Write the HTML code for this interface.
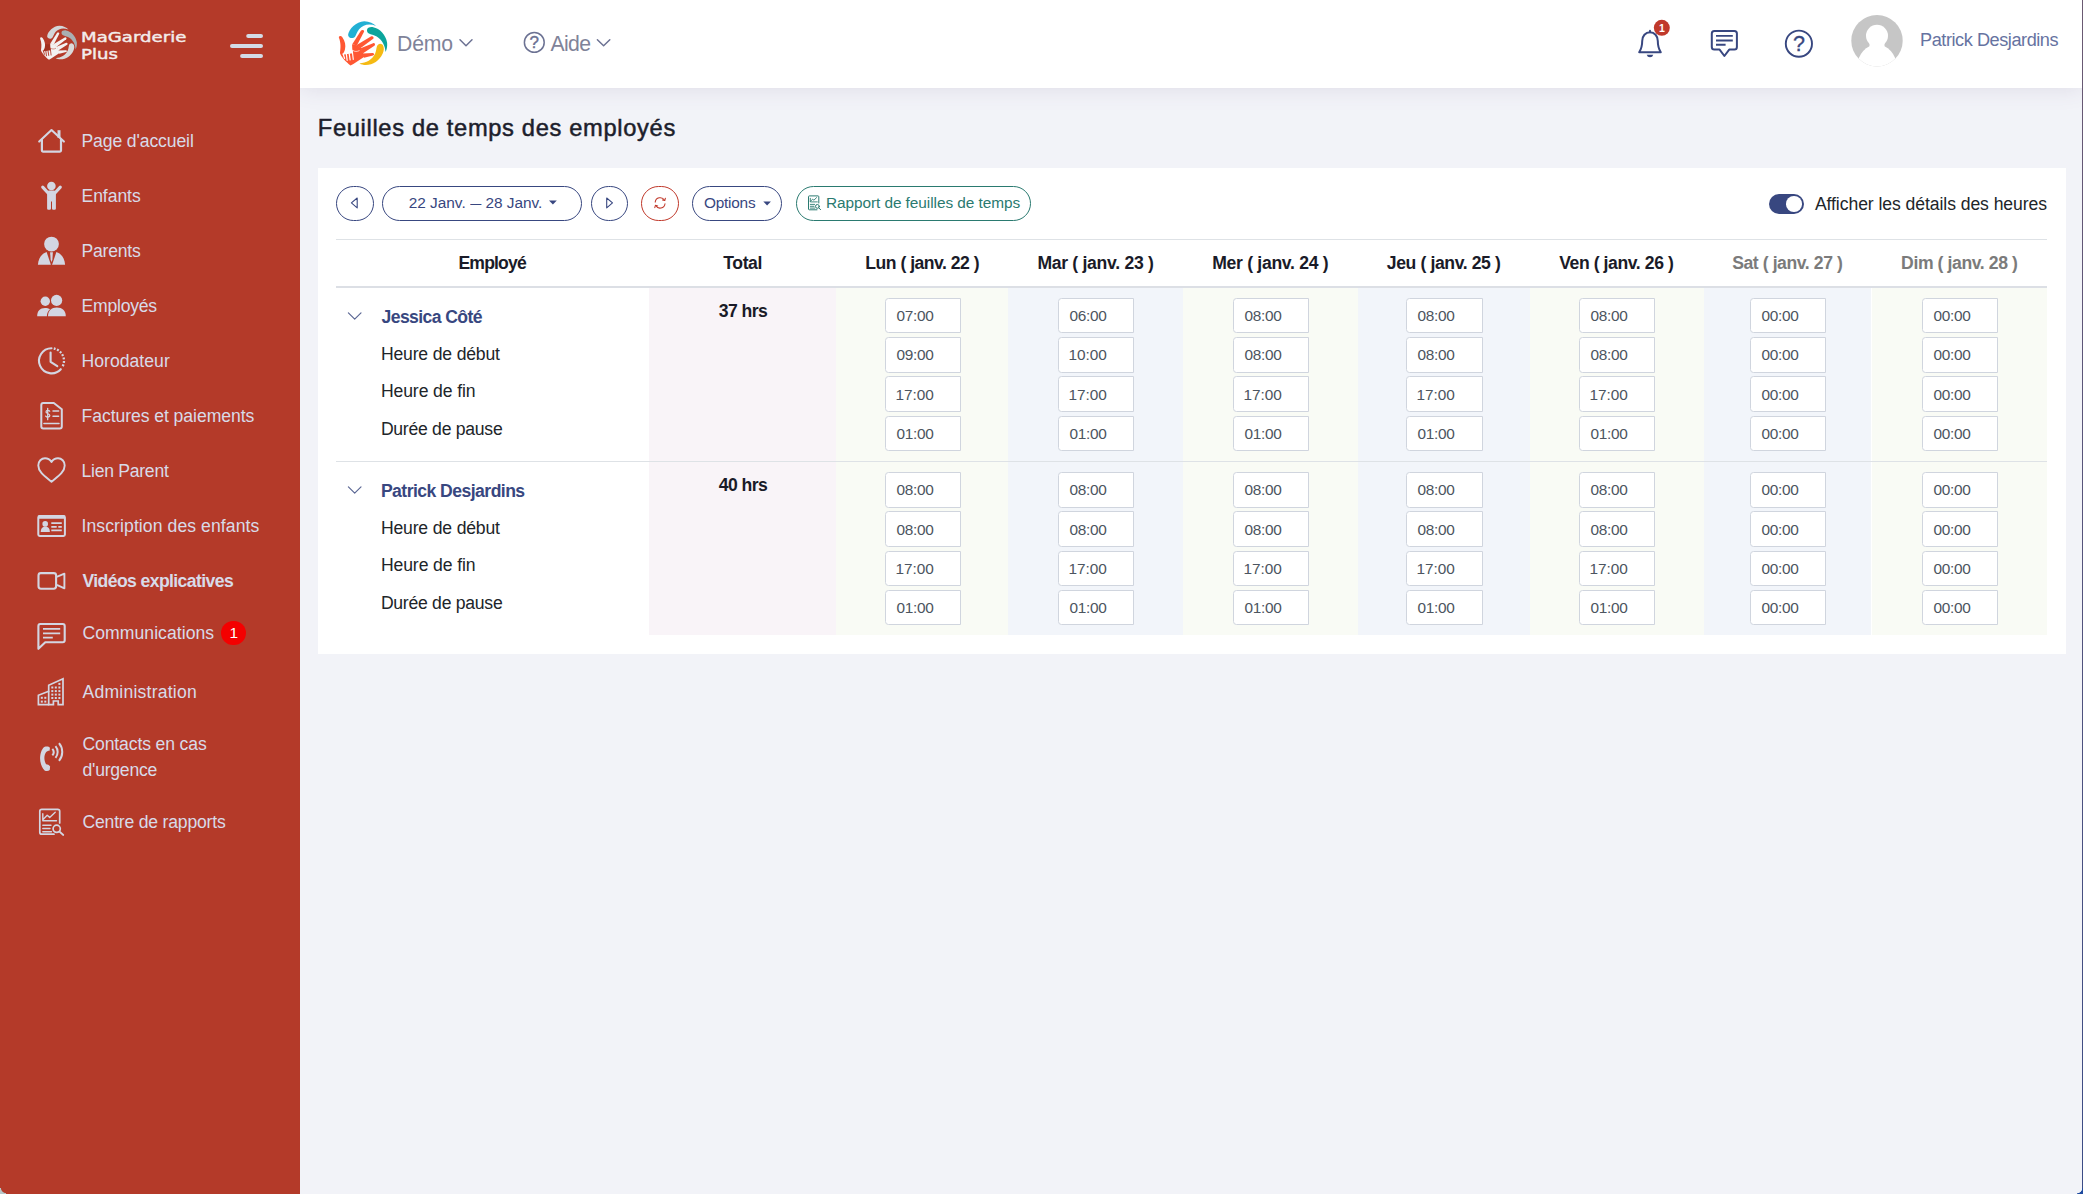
<!DOCTYPE html>
<html lang="fr">
<head>
<meta charset="utf-8">
<title>Feuilles de temps des employés</title>
<style>
*{box-sizing:border-box;margin:0;padding:0}
html,body{width:2083px;height:1194px;overflow:hidden;background:#f2f3f8}
body{font-family:"Liberation Sans",sans-serif;color:#212529}
#app{position:relative;width:2083px;height:1194px;overflow:hidden;background:#f2f3f8}
.t{position:absolute;white-space:nowrap;display:block;font-variant-ligatures:none}
.abs{position:absolute}
#sidebar{z-index:5;position:absolute;left:0;top:0;width:300px;height:1194px;background:#b43a29}
#topbar{position:absolute;left:300px;top:0;width:1783px;height:88px;background:#fff;box-shadow:0 0 22px 0 rgba(82,63,105,.13)}
#card{position:absolute;left:318px;top:168px;width:1748px;height:486px;background:#fff}
.edge{position:absolute;right:0;top:0;width:1px;height:1194px;background:linear-gradient(#6b5a72,#3b4c86)}
svg{position:absolute;overflow:visible}
.btn{position:absolute;top:186px;height:35px;border:1px solid #384780;border-radius:18px;background:#fff}
.inp{position:absolute;width:76px;height:35px;border:1px solid #d0d5de;border-radius:3.5px 0 0 3.5px;background:#fff}
.colbg{position:absolute;top:288px;height:347px}
.hl{position:absolute;left:336px;width:1711px}
.corner{position:absolute;right:0;bottom:0;width:6px;height:6px;z-index:9;background:radial-gradient(circle at 0 0,rgba(31,75,159,0) 4.9px,#1f4b9f 5.7px)}
.corner2{position:absolute;left:0;bottom:0;width:6px;height:6px;z-index:9;background:radial-gradient(circle at 100% 0,rgba(184,198,200,0) 4.6px,#b8c6c8 5.4px)}

</style>
</head>
<body>
<div id="app">
<nav>
<div id="sidebar">
<span id="t1" class="t brand" style="left:80.60px;top:25.00px;font-size:14.80px;line-height:24px;color:#f3eceb;font-family:'DejaVu Sans',sans-serif;transform-origin:0 50%;transform:scaleX(1.225);-webkit-text-stroke:0.45px #f3eceb;">MaGarderie</span>
<span id="t2" class="t brand" style="left:80.60px;top:41.90px;font-size:14.80px;line-height:24px;color:#f3eceb;font-family:'DejaVu Sans',sans-serif;transform-origin:0 50%;transform:scaleX(1.225);-webkit-text-stroke:0.45px #f3eceb;">Plus</span>
<span id="t3" class="t " style="left:81.50px;top:128.70px;font-size:17.60px;line-height:24px;color:#d8dbe8;letter-spacing:-0.122px;">Page d'accueil</span>
<span id="t4" class="t " style="left:81.50px;top:183.70px;font-size:17.60px;line-height:24px;color:#d8dbe8;letter-spacing:-0.079px;">Enfants</span>
<span id="t5" class="t " style="left:81.50px;top:238.70px;font-size:17.60px;line-height:24px;color:#d8dbe8;letter-spacing:-0.241px;">Parents</span>
<span id="t6" class="t " style="left:81.50px;top:293.70px;font-size:17.60px;line-height:24px;color:#d8dbe8;letter-spacing:-0.236px;">Employés</span>
<span id="t7" class="t " style="left:81.50px;top:348.70px;font-size:17.60px;line-height:24px;color:#d8dbe8;letter-spacing:0.025px;">Horodateur</span>
<span id="t8" class="t " style="left:81.50px;top:403.70px;font-size:17.60px;line-height:24px;color:#d8dbe8;letter-spacing:-0.064px;">Factures et paiements</span>
<span id="t9" class="t " style="left:81.50px;top:458.70px;font-size:17.60px;line-height:24px;color:#d8dbe8;letter-spacing:-0.271px;">Lien Parent</span>
<span id="t10" class="t " style="left:81.50px;top:513.70px;font-size:17.60px;line-height:24px;color:#d8dbe8;letter-spacing:0.080px;">Inscription des enfants</span>
<span id="t11" class="t " style="left:82.50px;top:568.90px;font-size:17.60px;line-height:24px;color:#d8dbe8;font-weight:700;letter-spacing:-0.603px;">Vidéos explicatives</span>
<span id="t12" class="t " style="left:82.50px;top:620.90px;font-size:17.60px;line-height:24px;color:#d8dbe8;letter-spacing:0.044px;">Communications</span>
<span id="t13" class="t " style="left:82.50px;top:680.00px;font-size:17.60px;line-height:24px;color:#d8dbe8;letter-spacing:0.208px;">Administration</span>
<span id="t14" class="t " style="left:82.50px;top:732.20px;font-size:17.60px;line-height:24px;color:#d8dbe8;letter-spacing:-0.140px;">Contacts en cas</span>
<span id="t15" class="t " style="left:82.50px;top:757.90px;font-size:17.60px;line-height:24px;color:#d8dbe8;letter-spacing:-0.244px;">d'urgence</span>
<span id="t16" class="t " style="left:82.50px;top:810.10px;font-size:17.60px;line-height:24px;color:#d8dbe8;letter-spacing:-0.206px;">Centre de rapports</span>
<div class="abs" style="left:221.4px;top:620.6px;width:24.6px;height:24.6px;border-radius:50%;background:#f40000"></div>
<span id="t17" class="t " style="left:233.70px;top:620.90px;font-size:15.40px;line-height:24px;color:#fff;transform:translateX(-50%);">1</span>
<svg width="300" height="1194" viewBox="0 0 300 1194" style="left:0;top:0" fill="none" stroke="#d3d6e2" stroke-width="2.2" stroke-linecap="round" stroke-linejoin="round">
<!-- hamburger -->
<g stroke="#d3dbe6" stroke-width="4">
<path d="M248.2 36H261M232 46H261M242.1 56H261"/>
</g>
<g transform="translate(-217.4,9.67) scale(0.76,0.7646) translate(330,12) scale(0.05193)" stroke="none">
<path d="M350,430 C365,330 500,180 660,176 C760,178 840,220 888,268 C760,215 640,240 560,330 C520,380 510,430 485,470 C450,515 380,510 355,465 C350,455 349,440 350,430Z" fill="#d3d6d8"/>
<path d="M712,350 C712,300 770,285 830,292 C960,315 1075,440 1100,590 C1105,660 1095,720 1070,772 C1060,640 1010,540 900,470 C840,440 790,435 750,415 C725,400 712,380 712,350Z" fill="#a9afb2"/>
<path d="M965,612 C1020,612 1040,670 1036,720 C1025,840 920,960 790,1005 C700,1030 620,1020 568,990 C700,985 810,920 870,800 C895,740 890,700 905,660 C915,630 940,612 965,612Z" fill="#dadada"/>
<path d="M292,640 L425,640 L432,738 L440,795 L248,822 C262,790 282,760 290,720Z" fill="#a2301f"/>
<g fill="#f3f1f1">
<path d="M170,492 C172,460 212,452 238,486 C290,565 308,640 288,722 C274,770 252,795 242,822 L440,792 L430,735 L425,625 L520,640 L600,700 L640,800 L662,862 L450,1000 L395,1032 C300,955 205,850 192,790 C205,700 215,600 170,492Z"/>
<path d="M425,625 L598,358 C615,335 665,345 655,378 L520,642Z"/>
<path d="M505,640 L795,468 C825,455 855,490 832,515 L585,700Z"/>
<path d="M590,700 L830,600 C865,592 880,635 855,650 L630,800Z"/>
<path d="M628,800 L825,788 C858,792 858,832 828,838 L655,880Z"/>
</g>
<g stroke="#b43a29" stroke-linecap="round" fill="none">
<path d="M252,805 L280,893" stroke-width="24"/>
<path d="M314,800 L330,930" stroke-width="24"/>
<path d="M370,800 L388,922" stroke-width="24"/>
<path d="M428,745 L448,912" stroke-width="22"/>
<path d="M436,738 C480,770 520,765 562,745" stroke-width="13"/>
</g>
</g>
<!-- home -->
<path d="M39.200 141.600L51.500 130.100 63.900 141.600" stroke-width="2.100"/>
<path d="M41.900 139.800V150.600a1 1 0 0 0 1 1H60a1 1 0 0 0 1-1V139.800" stroke-width="2.200"/>
<rect x="57.500" y="130.200" width="3" height="7.600" fill="#d3d6e2" stroke="none"/>
<!-- child -->
<g fill="#d3d6e2" stroke="none">
<circle cx="51.400" cy="186" r="4.300"/>
<path d="M47.100 192.500a2 2 0 0 1 2-2h4.800a2 2 0 0 1 2 2V208.600a1.200 1.200 0 0 1-1.200 1.200h-1.500a1.200 1.200 0 0 1-1.200-1.200V201.500h-1V208.600a1.200 1.200 0 0 1-1.200 1.200h-1.500a1.200 1.200 0 0 1-1.200-1.200z"/>
</g>
<path d="M48.300 193.200L42.700 187.100M54.700 193.200L60.300 187.100" stroke-width="3.100"/>
<!-- parent (user tie) -->
<g fill="#d3d6e2" stroke="none">
<circle cx="51.5" cy="244.100" r="7.400"/>
<path d="M37.900 264.800C38.300 258.300 41.700 253.600 46.600 251.900L50.900 264.800Z"/>
<path d="M65.100 264.800C64.700 258.300 61.300 253.600 56.400 251.900L52.100 264.800Z"/>
<path d="M50.100 252.300H52.900L52.400 259.500 51.500 262.300 50.600 259.500Z"/>
</g>
<!-- users -->
<g fill="#d3d6e2" stroke="none">
<circle cx="45.300" cy="301.300" r="4.700"/>
<circle cx="56.600" cy="300.400" r="5.600"/>
<path d="M37.200 316.300C37.200 311 40 308 45 308 47 308 48.700 308.400 50 309.200 47.800 311 46.900 313.500 46.900 316.300Z"/>
<path d="M48 316.300C48 310.500 51.500 307.600 56.800 307.600 62.200 307.600 65.800 310.500 65.800 316.300Z"/>
</g>
<!-- clock -->
<path d="M51.500 348.300A12.500 12.500 0 1 0 60.800 369.200" stroke-width="2.100"/>
<path d="M53.800 348.500A12.500 12.500 0 0 1 62.600 366.500" stroke-dasharray="1.900 1.550" stroke-width="2.300" stroke-linecap="butt"/>
<path d="M50.600 352.500V361.800L57.300 366.100" stroke-width="2.100"/>
<!-- invoice -->
<path d="M43.300 403H53.800L61.800 409.300V426.600a2 2 0 0 1-2 2H43.300a2 2 0 0 1-2-2V405a2 2 0 0 1 2-2z" stroke-width="2"/>
<path d="M53 411.100H58.600M53 416.300H58.600M43.900 423.500H59" stroke-width="1.500"/>
<path d="M49.700 411.200c-.6-1.100-3.400-1.300-3.700.5-.4 2 3.800 1.600 3.800 3.900 0 1.700-3 2-4.100.5M47.700 408.300v11.400" stroke-width="1.300"/>
<!-- heart -->
<path d="M51.500 481.800C45.500 476.600 38.300 472 38.300 465.400c0-4.200 3.100-7.200 6.700-7.200 2.700 0 4.900 1.300 6.500 3.700 1.600-2.400 3.800-3.700 6.500-3.700 3.600 0 6.700 3 6.700 7.200 0 6.600-7.200 11.200-13.200 16.400z" stroke-width="1.900"/>
<!-- id card -->
<rect x="38.300" y="516" width="26.600" height="19.900" rx="1.400" stroke-width="2"/>
<rect x="38.300" y="515.300" width="26.600" height="3.400" fill="#d3d6e2" stroke="none" rx=".8"/>
<g fill="#d3d6e2" stroke="none"><circle cx="45.200" cy="523.900" r="2.800"/><path d="M40.700 532c0-3.600 1.600-5.300 4.600-5.300s4.600 1.700 4.600 5.300z"/></g>
<path d="M51.300 523.100H61.800M51.300 526.900H56.700M58.300 526.900H61.800M51.300 530.400H61.800" stroke-width="1.700" stroke-linecap="butt"/>
<!-- video -->
<rect x="38.500" y="573.100" width="17.600" height="15.600" rx="2.400" stroke-width="2.100"/>
<path d="M57.300 576.600L64.400 573.700V588.300L57.300 585.200" stroke-width="1.900"/>
<!-- chat -->
<path d="M40.300 624H62.700a2 2 0 0 1 2 2V640.200a2 2 0 0 1-2 2H45.300L38.400 648.800V626a2 2 0 0 1 1.900-2z" stroke-width="2.100"/>
<path d="M43 628.900H60.200M43 633.300H60.200M43 637.700H52.800" stroke-width="1.800" stroke-linecap="butt"/>
<!-- building -->
<g stroke-width="1.700" stroke-linejoin="miter">
<path d="M48.700 704.600H38.400V695.300L48.700 691.300"/>
<path d="M48.700 704.600V685.200L63 678.700V704.600H58.200V701H53.400V704.600Z"/>
</g>
<g fill="#d3d6e2" stroke="none"><rect x="51.3" y="686.5" width="2" height="2"/><rect x="51.3" y="690.1" width="2" height="2"/><rect x="51.3" y="693.6" width="2" height="2"/><rect x="51.3" y="697.0" width="2" height="2"/><rect x="54.8" y="686.5" width="2" height="2"/><rect x="54.8" y="690.1" width="2" height="2"/><rect x="54.8" y="693.6" width="2" height="2"/><rect x="54.8" y="697.0" width="2" height="2"/><rect x="58.4" y="686.5" width="2" height="2"/><rect x="58.4" y="690.1" width="2" height="2"/><rect x="58.4" y="693.6" width="2" height="2"/><rect x="58.4" y="697.0" width="2" height="2"/><rect x="58.4" y="682.9" width="2" height="2"/><rect x="40.8" y="696.8" width="2" height="2"/><rect x="40.8" y="700.6" width="2" height="2"/><rect x="44.3" y="696.8" width="2" height="2"/><rect x="44.3" y="700.6" width="2" height="2"/></g>
<!-- phone -->
<g fill="#d3d6e2" stroke="none" transform="translate(30,735) scale(0.09225)">
<path d="M160,128C185,122 210,128 216,140L212,172C195,172 180,178 172,190C150,225 150,275 175,318C190,318 208,326 218,342L214,380C200,392 175,392 158,384C125,350 105,290 110,235C115,185 135,140 160,128Z"/>
</g>
<path d="M52.360 748.790A5.100 5.100 0 0 1 52.360 755.350M55.500 746.160A9.200 9.200 0 0 1 55.500 757.980M59.020 743.200A13.800 13.800 0 0 1 59.020 760.940" stroke-width="2" stroke-linecap="butt"/>
<!-- report -->
<g stroke-width="1.700">
<path d="M54 834.200H41.800a2 2 0 0 1-2-2V811.300a2 2 0 0 1 2-2H57.700a2 2 0 0 1 2 2V823"/>
<path d="M42.800 813.800V820.800H56.500M43.300 819.300L47.200 815.300 49.700 817.400 55.200 812.300M42.800 825.200H51M42.800 828.500H50M42.800 831.700H51.500" stroke-width="1.400"/>
<circle cx="56.700" cy="828.800" r="3.600"/>
<path d="M59.400 831.500L63.300 835"/>
</g>
</svg>

</div>
</nav>
<header>
<div id="topbar"></div>
<span id="t18" class="t " style="left:397.00px;top:31.50px;font-size:21.20px;line-height:24px;color:#7f8399;letter-spacing:-0.149px;">Démo</span>
<span id="t19" class="t " style="left:550.50px;top:31.50px;font-size:21.20px;line-height:24px;color:#7f8399;letter-spacing:-0.641px;">Aide</span>
<span id="t20" class="t " style="left:1920.10px;top:27.80px;font-size:18.15px;line-height:24px;color:#6673a1;letter-spacing:-0.454px;">Patrick Desjardins</span>
<span id="t21" class="t " style="left:1661.80px;top:15.90px;font-size:10.50px;line-height:24px;color:#fff;font-weight:700;transform:translateX(-50%);z-index:3;">1</span>
<svg width="1783" height="88" viewBox="300 0 1783 88" style="left:300px;top:0" fill="none" stroke-linecap="round" stroke-linejoin="round">
<g transform="translate(330,12) scale(0.05193)" stroke="none">
<path d="M350,430 C365,330 500,180 660,176 C760,178 840,220 888,268 C760,215 640,240 560,330 C520,380 510,430 485,470 C450,515 380,510 355,465 C350,455 349,440 350,430Z" fill="#22b0d4"/>
<path d="M712,350 C712,300 770,285 830,292 C960,315 1075,440 1100,590 C1105,660 1095,720 1070,772 C1060,640 1010,540 900,470 C840,440 790,435 750,415 C725,400 712,380 712,350Z" fill="#0ba59c"/>
<path d="M965,612 C1020,612 1040,670 1036,720 C1025,840 920,960 790,1005 C700,1030 620,1020 568,990 C700,985 810,920 870,800 C895,740 890,700 905,660 C915,630 940,612 965,612Z" fill="#f5ba13"/>
<path d="M292,640 L425,640 L432,738 L440,795 L248,822 C262,790 282,760 290,720Z" fill="none"/>
<g fill="#ff5733">
<path d="M170,492 C172,460 212,452 238,486 C290,565 308,640 288,722 C274,770 252,795 242,822 L440,792 L430,735 L425,625 L520,640 L600,700 L640,800 L662,862 L450,1000 L395,1032 C300,955 205,850 192,790 C205,700 215,600 170,492Z"/>
<path d="M425,625 L598,358 C615,335 665,345 655,378 L520,642Z"/>
<path d="M505,640 L795,468 C825,455 855,490 832,515 L585,700Z"/>
<path d="M590,700 L830,600 C865,592 880,635 855,650 L630,800Z"/>
<path d="M628,800 L825,788 C858,792 858,832 828,838 L655,880Z"/>
</g>
<g stroke="#ffffff" stroke-linecap="round" fill="none">
<path d="M252,805 L280,893" stroke-width="24"/>
<path d="M314,800 L330,930" stroke-width="24"/>
<path d="M370,800 L388,922" stroke-width="24"/>
<path d="M428,745 L448,912" stroke-width="22"/>
<path d="M436,738 C480,770 520,765 562,745" stroke-width="13"/>
</g>
</g>
<!-- chevrons -->
<g stroke="#6c7293" stroke-width="1.500">
<path d="M460 39.800L466 45.800 472 39.800"/>
<path d="M597.400 39.800L603.600 45.800 609.800 39.800"/>
<circle cx="534.300" cy="42.400" r="9.900"/>
</g>
<!-- bell -->
<g stroke="#384780" stroke-width="2">
<path d="M1639.200 52.200C1642 48 1642.200 44 1642.200 41 1642.200 36 1645.500 32.200 1650 32.200 1654.500 32.200 1657.800 36 1657.800 41 1657.800 44 1658 48 1660.800 52.200Z"/>
<path d="M1650 32.200V30.800"/>
<path d="M1646.700 54.700a3.400 3.400 0 0 0 6.600 0z" fill="#384780" stroke="none"/>
</g>
<circle cx="1661.800" cy="27.800" r="8" fill="#c0392b"/>
<!-- chat -->
<g stroke="#384780" stroke-width="2">
<path d="M1714.300 31H1734.400a2.500 2.500 0 0 1 2.500 2.500V47.100a2.500 2.500 0 0 1-2.500 2.500H1729.200L1724.400 56 1719.600 49.600H1714.300a2.500 2.500 0 0 1-2.500-2.500V33.500a2.500 2.500 0 0 1 2.500-2.500z"/>
<path d="M1716 35.900H1732.800M1716 40.500H1732.800M1716 44.800H1725.600" stroke-width="1.900" stroke-linecap="butt"/>
</g>
<!-- help circle -->
<circle cx="1798.900" cy="43.700" r="13.100" stroke="#384780" stroke-width="1.900"/>
<!-- avatar -->
<clipPath id="avc"><circle cx="1877" cy="40.700" r="25.700"/></clipPath>
<circle cx="1877" cy="40.700" r="25.700" fill="#c6c6c6"/>
<g clip-path="url(#avc)" fill="#fff" stroke="none">
<circle cx="1877" cy="35.800" r="11"/>
<rect x="1869.500" y="40" width="15" height="9"/>
<ellipse cx="1877" cy="66" rx="19.500" ry="21.300"/>
</g>
</svg>

<span id="t22" class="t " style="left:534.30px;top:30.50px;font-size:17.00px;line-height:24px;color:#6c7293;transform:translateX(-50%);-webkit-text-stroke:0.4px #6c7293;">?</span>
<span id="t23" class="t " style="left:1798.90px;top:31.90px;font-size:21.50px;line-height:24px;color:#384780;transform:translateX(-50%);-webkit-text-stroke:0.35px #384780;">?</span>
</header>
<main>
<span id="t24" class="t " style="left:317.80px;top:113.00px;font-size:23.70px;line-height:30px;color:#1d1e2c;letter-spacing:0.658px;-webkit-text-stroke:0.5px #1d1e2c;">Feuilles de temps des employés</span>
<div id="card"></div>
<div class="btn" style="left:336px;width:38px"></div>
<div class="btn" style="left:382px;width:200px"></div>
<div class="btn" style="left:590.5px;width:37.500px"></div>
<div class="btn" style="left:641px;width:38px;border-color:#c0392b"></div>
<div class="btn" style="left:692px;width:90px"></div>
<div class="btn" style="left:796px;width:235px;border-color:#2a7a70"></div>
<span id="t25" class="t " style="left:408.70px;top:191.40px;font-size:15.40px;line-height:24px;color:#384780;letter-spacing:-0.010px;">22 Janv. <span style="display:inline-block;transform:scaleX(0.72);margin:0 -2.1px">—</span> 28 Janv.</span>
<span id="t26" class="t " style="left:703.90px;top:191.40px;font-size:15.40px;line-height:24px;color:#384780;letter-spacing:-0.225px;">Options</span>
<span id="t27" class="t " style="left:825.90px;top:191.20px;font-size:15.40px;line-height:24px;color:#2a7a70;letter-spacing:-0.064px;">Rapport de feuilles de temps</span>
<div class="abs" style="left:1769px;top:194px;width:35.200px;height:20px;border-radius:10px;background:#384780"></div>
<div class="abs" style="left:1786.300px;top:196.200px;width:15.600px;height:15.600px;border-radius:50%;background:#fff"></div>
<span id="t28" class="t " style="left:1814.90px;top:191.60px;font-size:17.60px;line-height:24px;color:#212529;letter-spacing:-0.073px;">Afficher les détails des heures</span>
<div class="hl" style="top:239px;height:1.300px;background:#dee2e6"></div>
<div class="hl" style="top:286px;height:2px;background:#dcdfe5"></div>
<div class="hl" style="top:461px;height:1px;background:#dee2e6;z-index:2"></div>
<div class="colbg" style="left:649.2px;width:186.6px;background:#f9f4f8"></div>
<div class="colbg" style="left:835.8px;width:172.3px;background:#f9fbf5"></div>
<div class="colbg" style="left:1008.1px;width:174.9px;background:#f2f5fa"></div>
<div class="colbg" style="left:1183.0px;width:174.9px;background:#f9fbf5"></div>
<div class="colbg" style="left:1357.9px;width:171.8px;background:#f2f5fa"></div>
<div class="colbg" style="left:1529.7px;width:174.5px;background:#f9fbf5"></div>
<div class="colbg" style="left:1704.2px;width:167.3px;background:#f2f5fa"></div>
<div class="colbg" style="left:1871.5px;width:175.5px;background:#f9fbf5"></div>
<span id="t29" class="t " style="left:458.50px;top:250.80px;font-size:17.60px;line-height:24px;color:#1a1b28;font-weight:700;letter-spacing:-0.860px;">Employé</span>
<span id="t30" class="t " style="left:723.30px;top:250.80px;font-size:17.60px;line-height:24px;color:#1a1b28;font-weight:700;letter-spacing:-0.412px;">Total</span>
<span id="t31" class="t " style="left:865.30px;top:250.80px;font-size:17.60px;line-height:24px;color:#1a1b28;font-weight:700;letter-spacing:-0.501px;">Lun ( janv. 22 )</span>
<span id="t32" class="t " style="left:1037.40px;top:250.80px;font-size:17.60px;line-height:24px;color:#1a1b28;font-weight:700;letter-spacing:-0.298px;">Mar ( janv. 23 )</span>
<span id="t33" class="t " style="left:1212.20px;top:250.80px;font-size:17.60px;line-height:24px;color:#1a1b28;font-weight:700;letter-spacing:-0.298px;">Mer ( janv. 24 )</span>
<span id="t34" class="t " style="left:1386.80px;top:250.80px;font-size:17.60px;line-height:24px;color:#1a1b28;font-weight:700;letter-spacing:-0.393px;">Jeu ( janv. 25 )</span>
<span id="t35" class="t " style="left:1559.20px;top:250.80px;font-size:17.60px;line-height:24px;color:#1a1b28;font-weight:700;letter-spacing:-0.418px;">Ven ( janv. 26 )</span>
<span id="t36" class="t " style="left:1732.20px;top:250.80px;font-size:17.60px;line-height:24px;color:#7b7b7b;font-weight:700;letter-spacing:-0.424px;">Sat ( janv. 27 )</span>
<span id="t37" class="t " style="left:1901.10px;top:250.80px;font-size:17.60px;line-height:24px;color:#7b7b7b;font-weight:700;letter-spacing:-0.401px;">Dim ( janv. 28 )</span>
<span id="t38" class="t " style="left:381.50px;top:304.70px;font-size:17.60px;line-height:24px;color:#384780;font-weight:700;letter-spacing:-0.592px;">Jessica Côté</span>
<span id="t39" class="t " style="left:380.90px;top:341.60px;font-size:17.60px;line-height:24px;color:#212529;letter-spacing:-0.170px;">Heure de début</span>
<span id="t40" class="t " style="left:380.90px;top:379.40px;font-size:17.60px;line-height:24px;color:#212529;letter-spacing:-0.098px;">Heure de fin</span>
<span id="t41" class="t " style="left:380.90px;top:416.90px;font-size:17.60px;line-height:24px;color:#212529;letter-spacing:-0.263px;">Durée de pause</span>
<span id="t42" class="t " style="left:718.80px;top:298.60px;font-size:17.60px;line-height:24px;color:#1a1b28;font-weight:700;letter-spacing:-0.572px;">37 hrs</span>
<div class="inp" style="left:885px;top:298px;height:35px"></div>
<span id="t43" class="t " style="left:896.50px;top:303.70px;font-size:15.40px;line-height:24px;color:#4c5560;letter-spacing:-0.314px;">07:00</span>
<div class="inp" style="left:1058px;top:298px;height:35px"></div>
<span id="t44" class="t " style="left:1069.50px;top:303.70px;font-size:15.40px;line-height:24px;color:#4c5560;letter-spacing:-0.314px;">06:00</span>
<div class="inp" style="left:1233px;top:298px;height:35px"></div>
<span id="t45" class="t " style="left:1244.50px;top:303.70px;font-size:15.40px;line-height:24px;color:#4c5560;letter-spacing:-0.314px;">08:00</span>
<div class="inp" style="left:1406px;top:298px;height:35px;width:77px"></div>
<span id="t46" class="t " style="left:1417.50px;top:303.70px;font-size:15.40px;line-height:24px;color:#4c5560;letter-spacing:-0.314px;">08:00</span>
<div class="inp" style="left:1579px;top:298px;height:35px"></div>
<span id="t47" class="t " style="left:1590.50px;top:303.70px;font-size:15.40px;line-height:24px;color:#4c5560;letter-spacing:-0.314px;">08:00</span>
<div class="inp" style="left:1750px;top:298px;height:35px"></div>
<span id="t48" class="t " style="left:1761.50px;top:303.70px;font-size:15.40px;line-height:24px;color:#4c5560;letter-spacing:-0.314px;">00:00</span>
<div class="inp" style="left:1922px;top:298px;height:35px"></div>
<span id="t49" class="t " style="left:1933.50px;top:303.70px;font-size:15.40px;line-height:24px;color:#4c5560;letter-spacing:-0.314px;">00:00</span>
<div class="inp" style="left:885px;top:337px;height:36px"></div>
<span id="t50" class="t " style="left:896.50px;top:342.90px;font-size:15.40px;line-height:24px;color:#4c5560;letter-spacing:-0.314px;">09:00</span>
<div class="inp" style="left:1058px;top:337px;height:36px"></div>
<span id="t51" class="t " style="left:1068.50px;top:342.90px;font-size:15.40px;line-height:24px;color:#4c5560;letter-spacing:-0.064px;">10:00</span>
<div class="inp" style="left:1233px;top:337px;height:36px"></div>
<span id="t52" class="t " style="left:1244.50px;top:342.90px;font-size:15.40px;line-height:24px;color:#4c5560;letter-spacing:-0.314px;">08:00</span>
<div class="inp" style="left:1406px;top:337px;height:36px;width:77px"></div>
<span id="t53" class="t " style="left:1417.50px;top:342.90px;font-size:15.40px;line-height:24px;color:#4c5560;letter-spacing:-0.314px;">08:00</span>
<div class="inp" style="left:1579px;top:337px;height:36px"></div>
<span id="t54" class="t " style="left:1590.50px;top:342.90px;font-size:15.40px;line-height:24px;color:#4c5560;letter-spacing:-0.314px;">08:00</span>
<div class="inp" style="left:1750px;top:337px;height:36px"></div>
<span id="t55" class="t " style="left:1761.50px;top:342.90px;font-size:15.40px;line-height:24px;color:#4c5560;letter-spacing:-0.314px;">00:00</span>
<div class="inp" style="left:1922px;top:337px;height:36px"></div>
<span id="t56" class="t " style="left:1933.50px;top:342.90px;font-size:15.40px;line-height:24px;color:#4c5560;letter-spacing:-0.314px;">00:00</span>
<div class="inp" style="left:885px;top:376px;height:36px"></div>
<span id="t57" class="t " style="left:895.50px;top:382.70px;font-size:15.40px;line-height:24px;color:#4c5560;letter-spacing:-0.064px;">17:00</span>
<div class="inp" style="left:1058px;top:376px;height:36px"></div>
<span id="t58" class="t " style="left:1068.50px;top:382.70px;font-size:15.40px;line-height:24px;color:#4c5560;letter-spacing:-0.064px;">17:00</span>
<div class="inp" style="left:1233px;top:376px;height:36px"></div>
<span id="t59" class="t " style="left:1243.50px;top:382.70px;font-size:15.40px;line-height:24px;color:#4c5560;letter-spacing:-0.064px;">17:00</span>
<div class="inp" style="left:1406px;top:376px;height:36px;width:77px"></div>
<span id="t60" class="t " style="left:1416.50px;top:382.70px;font-size:15.40px;line-height:24px;color:#4c5560;letter-spacing:-0.064px;">17:00</span>
<div class="inp" style="left:1579px;top:376px;height:36px"></div>
<span id="t61" class="t " style="left:1589.50px;top:382.70px;font-size:15.40px;line-height:24px;color:#4c5560;letter-spacing:-0.064px;">17:00</span>
<div class="inp" style="left:1750px;top:376px;height:36px"></div>
<span id="t62" class="t " style="left:1761.50px;top:382.70px;font-size:15.40px;line-height:24px;color:#4c5560;letter-spacing:-0.314px;">00:00</span>
<div class="inp" style="left:1922px;top:376px;height:36px"></div>
<span id="t63" class="t " style="left:1933.50px;top:382.70px;font-size:15.40px;line-height:24px;color:#4c5560;letter-spacing:-0.314px;">00:00</span>
<div class="inp" style="left:885px;top:416px;height:35px"></div>
<span id="t64" class="t " style="left:896.50px;top:421.80px;font-size:15.40px;line-height:24px;color:#4c5560;letter-spacing:-0.314px;">01:00</span>
<div class="inp" style="left:1058px;top:416px;height:35px"></div>
<span id="t65" class="t " style="left:1069.50px;top:421.80px;font-size:15.40px;line-height:24px;color:#4c5560;letter-spacing:-0.314px;">01:00</span>
<div class="inp" style="left:1233px;top:416px;height:35px"></div>
<span id="t66" class="t " style="left:1244.50px;top:421.80px;font-size:15.40px;line-height:24px;color:#4c5560;letter-spacing:-0.314px;">01:00</span>
<div class="inp" style="left:1406px;top:416px;height:35px;width:77px"></div>
<span id="t67" class="t " style="left:1417.50px;top:421.80px;font-size:15.40px;line-height:24px;color:#4c5560;letter-spacing:-0.314px;">01:00</span>
<div class="inp" style="left:1579px;top:416px;height:35px"></div>
<span id="t68" class="t " style="left:1590.50px;top:421.80px;font-size:15.40px;line-height:24px;color:#4c5560;letter-spacing:-0.314px;">01:00</span>
<div class="inp" style="left:1750px;top:416px;height:35px"></div>
<span id="t69" class="t " style="left:1761.50px;top:421.80px;font-size:15.40px;line-height:24px;color:#4c5560;letter-spacing:-0.314px;">00:00</span>
<div class="inp" style="left:1922px;top:416px;height:35px"></div>
<span id="t70" class="t " style="left:1933.50px;top:421.80px;font-size:15.40px;line-height:24px;color:#4c5560;letter-spacing:-0.314px;">00:00</span>
<span id="t71" class="t " style="left:380.90px;top:478.70px;font-size:17.60px;line-height:24px;color:#384780;font-weight:700;letter-spacing:-0.545px;">Patrick Desjardins</span>
<span id="t72" class="t " style="left:380.90px;top:515.60px;font-size:17.60px;line-height:24px;color:#212529;letter-spacing:-0.170px;">Heure de début</span>
<span id="t73" class="t " style="left:380.90px;top:553.40px;font-size:17.60px;line-height:24px;color:#212529;letter-spacing:-0.098px;">Heure de fin</span>
<span id="t74" class="t " style="left:380.90px;top:590.90px;font-size:17.60px;line-height:24px;color:#212529;letter-spacing:-0.263px;">Durée de pause</span>
<span id="t75" class="t " style="left:718.80px;top:472.60px;font-size:17.60px;line-height:24px;color:#1a1b28;font-weight:700;letter-spacing:-0.572px;">40 hrs</span>
<div class="inp" style="left:885px;top:472px;height:36px"></div>
<span id="t76" class="t " style="left:896.50px;top:478.20px;font-size:15.40px;line-height:24px;color:#4c5560;letter-spacing:-0.314px;">08:00</span>
<div class="inp" style="left:1058px;top:472px;height:36px"></div>
<span id="t77" class="t " style="left:1069.50px;top:478.20px;font-size:15.40px;line-height:24px;color:#4c5560;letter-spacing:-0.314px;">08:00</span>
<div class="inp" style="left:1233px;top:472px;height:36px"></div>
<span id="t78" class="t " style="left:1244.50px;top:478.20px;font-size:15.40px;line-height:24px;color:#4c5560;letter-spacing:-0.314px;">08:00</span>
<div class="inp" style="left:1406px;top:472px;height:36px;width:77px"></div>
<span id="t79" class="t " style="left:1417.50px;top:478.20px;font-size:15.40px;line-height:24px;color:#4c5560;letter-spacing:-0.314px;">08:00</span>
<div class="inp" style="left:1579px;top:472px;height:36px"></div>
<span id="t80" class="t " style="left:1590.50px;top:478.20px;font-size:15.40px;line-height:24px;color:#4c5560;letter-spacing:-0.314px;">08:00</span>
<div class="inp" style="left:1750px;top:472px;height:36px"></div>
<span id="t81" class="t " style="left:1761.50px;top:478.20px;font-size:15.40px;line-height:24px;color:#4c5560;letter-spacing:-0.314px;">00:00</span>
<div class="inp" style="left:1922px;top:472px;height:36px"></div>
<span id="t82" class="t " style="left:1933.50px;top:478.20px;font-size:15.40px;line-height:24px;color:#4c5560;letter-spacing:-0.314px;">00:00</span>
<div class="inp" style="left:885px;top:511px;height:36px"></div>
<span id="t83" class="t " style="left:896.50px;top:517.90px;font-size:15.40px;line-height:24px;color:#4c5560;letter-spacing:-0.314px;">08:00</span>
<div class="inp" style="left:1058px;top:511px;height:36px"></div>
<span id="t84" class="t " style="left:1069.50px;top:517.90px;font-size:15.40px;line-height:24px;color:#4c5560;letter-spacing:-0.314px;">08:00</span>
<div class="inp" style="left:1233px;top:511px;height:36px"></div>
<span id="t85" class="t " style="left:1244.50px;top:517.90px;font-size:15.40px;line-height:24px;color:#4c5560;letter-spacing:-0.314px;">08:00</span>
<div class="inp" style="left:1406px;top:511px;height:36px;width:77px"></div>
<span id="t86" class="t " style="left:1417.50px;top:517.90px;font-size:15.40px;line-height:24px;color:#4c5560;letter-spacing:-0.314px;">08:00</span>
<div class="inp" style="left:1579px;top:511px;height:36px"></div>
<span id="t87" class="t " style="left:1590.50px;top:517.90px;font-size:15.40px;line-height:24px;color:#4c5560;letter-spacing:-0.314px;">08:00</span>
<div class="inp" style="left:1750px;top:511px;height:36px"></div>
<span id="t88" class="t " style="left:1761.50px;top:517.90px;font-size:15.40px;line-height:24px;color:#4c5560;letter-spacing:-0.314px;">00:00</span>
<div class="inp" style="left:1922px;top:511px;height:36px"></div>
<span id="t89" class="t " style="left:1933.50px;top:517.90px;font-size:15.40px;line-height:24px;color:#4c5560;letter-spacing:-0.314px;">00:00</span>
<div class="inp" style="left:885px;top:551px;height:35px"></div>
<span id="t90" class="t " style="left:895.50px;top:556.80px;font-size:15.40px;line-height:24px;color:#4c5560;letter-spacing:-0.064px;">17:00</span>
<div class="inp" style="left:1058px;top:551px;height:35px"></div>
<span id="t91" class="t " style="left:1068.50px;top:556.80px;font-size:15.40px;line-height:24px;color:#4c5560;letter-spacing:-0.064px;">17:00</span>
<div class="inp" style="left:1233px;top:551px;height:35px"></div>
<span id="t92" class="t " style="left:1243.50px;top:556.80px;font-size:15.40px;line-height:24px;color:#4c5560;letter-spacing:-0.064px;">17:00</span>
<div class="inp" style="left:1406px;top:551px;height:35px;width:77px"></div>
<span id="t93" class="t " style="left:1416.50px;top:556.80px;font-size:15.40px;line-height:24px;color:#4c5560;letter-spacing:-0.064px;">17:00</span>
<div class="inp" style="left:1579px;top:551px;height:35px"></div>
<span id="t94" class="t " style="left:1589.50px;top:556.80px;font-size:15.40px;line-height:24px;color:#4c5560;letter-spacing:-0.064px;">17:00</span>
<div class="inp" style="left:1750px;top:551px;height:35px"></div>
<span id="t95" class="t " style="left:1761.50px;top:556.80px;font-size:15.40px;line-height:24px;color:#4c5560;letter-spacing:-0.314px;">00:00</span>
<div class="inp" style="left:1922px;top:551px;height:35px"></div>
<span id="t96" class="t " style="left:1933.50px;top:556.80px;font-size:15.40px;line-height:24px;color:#4c5560;letter-spacing:-0.314px;">00:00</span>
<div class="inp" style="left:885px;top:590px;height:35px"></div>
<span id="t97" class="t " style="left:896.50px;top:595.80px;font-size:15.40px;line-height:24px;color:#4c5560;letter-spacing:-0.314px;">01:00</span>
<div class="inp" style="left:1058px;top:590px;height:35px"></div>
<span id="t98" class="t " style="left:1069.50px;top:595.80px;font-size:15.40px;line-height:24px;color:#4c5560;letter-spacing:-0.314px;">01:00</span>
<div class="inp" style="left:1233px;top:590px;height:35px"></div>
<span id="t99" class="t " style="left:1244.50px;top:595.80px;font-size:15.40px;line-height:24px;color:#4c5560;letter-spacing:-0.314px;">01:00</span>
<div class="inp" style="left:1406px;top:590px;height:35px;width:77px"></div>
<span id="t100" class="t " style="left:1417.50px;top:595.80px;font-size:15.40px;line-height:24px;color:#4c5560;letter-spacing:-0.314px;">01:00</span>
<div class="inp" style="left:1579px;top:590px;height:35px"></div>
<span id="t101" class="t " style="left:1590.50px;top:595.80px;font-size:15.40px;line-height:24px;color:#4c5560;letter-spacing:-0.314px;">01:00</span>
<div class="inp" style="left:1750px;top:590px;height:35px"></div>
<span id="t102" class="t " style="left:1761.50px;top:595.80px;font-size:15.40px;line-height:24px;color:#4c5560;letter-spacing:-0.314px;">00:00</span>
<div class="inp" style="left:1922px;top:590px;height:35px"></div>
<span id="t103" class="t " style="left:1933.50px;top:595.80px;font-size:15.40px;line-height:24px;color:#4c5560;letter-spacing:-0.314px;">00:00</span>
<svg width="1783" height="600" viewBox="300 100 1783 600" style="left:300px;top:100px" fill="none" stroke-linecap="round" stroke-linejoin="round">
<!-- prev / next triangles -->
<g stroke="#384780" stroke-width="1.100">
<path d="M357.200 198L351.400 202.900 357.200 207.800Z"/>
<path d="M606.700 198L612.500 202.900 606.700 207.800Z"/>
</g>
<!-- carets -->
<g fill="#384780" stroke="none">
<path d="M549 200.600H556.800L552.900 204.500Z"/>
<path d="M763.300 201.600H770.900L767.100 205.400Z"/>
</g>
<!-- refresh -->
<g stroke="#c0392b" stroke-width="1.050">
<path d="M655.200 202.100a5 5 0 0 1 9.300-1.900"/>
<path d="M665 203.700a5 5 0 0 1-9.300 1.900"/>
<path d="M665.400 198.200L664.800 200.500 662.500 199.900" />
<path d="M654.800 207.600L655.400 205.300 657.700 205.900" />
</g>
<!-- report icon small -->
<g stroke="#2a7a70" stroke-width="1">
<path d="M817 209.800H809.300a.8.800 0 0 1-.8-.8V196.700a.8.800 0 0 1 .8-.8H818a.8.800 0 0 1 .8.800V203"/>
<path d="M810.300 198.300V201.900H817.300M810.600 201.200L812.600 199.200 813.900 200.200 816.600 197.600M810.300 204.400H814.600M810.300 206.300H814M810.300 208.100H814.800" stroke-width=".9"/>
<circle cx="817.400" cy="206.400" r="1.900"/>
<path d="M818.800 207.900L820.600 209.600"/>
</g>
<!-- row chevrons -->
<g stroke="#5b6794" stroke-width="1.200">
<path d="M348.400 312.800L354.700 319.100 361 312.800"/>
<path d="M348.400 486.800L354.700 493.100 361 486.800"/>
</g>
</svg>

</main>
<div class="edge"></div>
<div class="corner"></div>
<div class="corner2"></div>
</div>
</body>
</html>
